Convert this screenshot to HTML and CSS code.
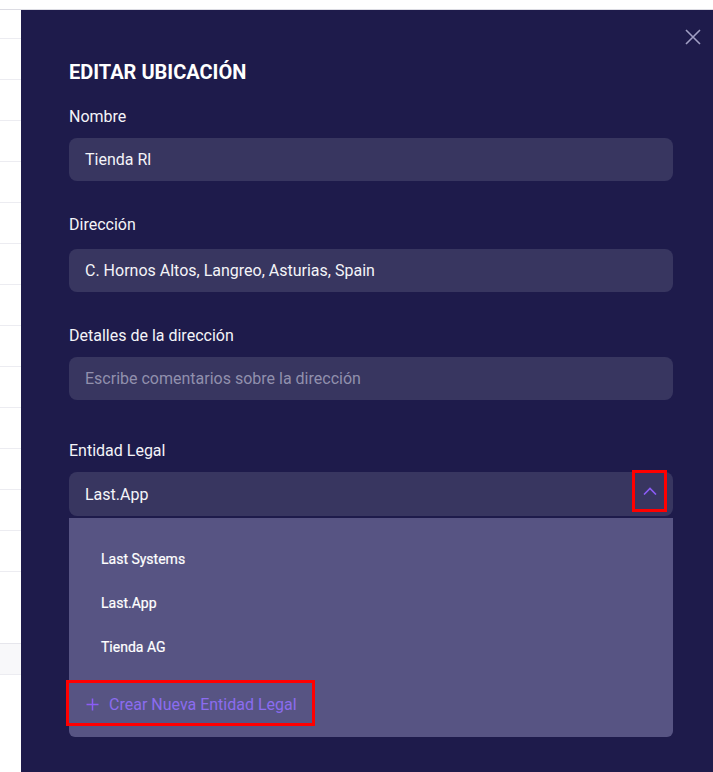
FILE: index.html
```html
<!DOCTYPE html>
<html lang="es">
<head>
    <meta charset="UTF-8">
    <meta name="viewport" content="width=device-width, initial-scale=1.0">
    <title>Editar ubicación</title>
    <link rel="stylesheet" href="styles.css">
</head>
<body>
    <!-- tabla de fondo -->
    <div class="page">
        <div class="topbar"></div>
        <div class="row row-first"></div>
        <div class="row"></div>
        <div class="row"></div>
        <div class="row"></div>
        <div class="row"></div>
        <div class="row"></div>
        <div class="row"></div>
        <div class="row"></div>
        <div class="row"></div>
        <div class="row"></div>
        <div class="row"></div>
        <div class="row"></div>
        <div class="row"></div>
        <div class="row"></div>
        <div class="spacer"></div>
        <div class="band"></div>
    </div>

    <!-- panel lateral -->
    <aside class="drawer">
        <button class="close" aria-label="Cerrar">
            <svg width="16" height="16" viewBox="0 0 16 16"><path d="M1 1L15 15M15 1L1 15" stroke="#a19fc4" stroke-width="1.6" fill="none"/></svg>
        </button>

        <h2 class="title">EDITAR UBICACIÓN</h2>

        <div class="field">
            <label class="label">Nombre</label>
            <div class="input">Tienda Rl</div>
        </div>

        <div class="field field-wide">
            <label class="label">Dirección</label>
            <div class="input">C. Hornos Altos, Langreo, Asturias, Spain</div>
        </div>

        <div class="field field-last">
            <label class="label">Detalles de la dirección</label>
            <div class="input placeholder">Escribe comentarios sobre la dirección</div>
        </div>

        <div class="field">
            <label class="label">Entidad Legal</label>
            <div class="input select">
                <span>Last.App</span>
                <span class="chevron">
                    <svg width="14" height="8" viewBox="0 0 14 8"><path d="M1 7.5L7 1.5L13 7.5" stroke="#8b5cf6" stroke-width="1.6" fill="none"/></svg>
                </span>
            </div>
            <div class="menu">
                <div class="option">Last Systems</div>
                <div class="option">Last.App</div>
                <div class="option">Tienda AG</div>
                <button class="create">
                    <svg width="13" height="13" viewBox="0 0 13 13"><path d="M6.5 0.5V12.5M0.5 6.5H12.5" stroke="#8b5cf6" stroke-width="1.5" fill="none"/></svg>
                    <span>Crear Nueva Entidad Legal</span>
                </button>
            </div>
        </div>
    </aside>
</body>
</html>
```

FILE: styles.css
```css
body {
    margin: 0;
    font-family: Roboto, "Liberation Sans", sans-serif;
    background: #fff;
}

/* fondo */
.page {
    display: flex;
    flex-direction: column;
}
.topbar {
    height: 9px;
    border-bottom: 1px solid #dcdce3;
}
.row {
    height: 40px;
    border-bottom: 1px solid #ececf1;
}
.row-first {
    height: 28px;
}
.spacer {
    height: 71px;
}
.band {
    height: 30px;
    background: #f8f8fa;
    border-top: 1px solid #e6e6ec;
    border-bottom: 1px solid #ececf1;
}

/* panel */
.drawer {
    position: fixed;
    top: 10px;
    left: 21px;
    right: 0;
    bottom: 0;
    background: #1e1b4b;
    padding: 50px 40px 0 48px;
    color: #f4f4f8;
}
.close {
    position: absolute;
    top: 19px;
    right: 12px;
    background: none;
    border: 0;
    padding: 0;
    width: 16px;
    height: 16px;
}
.close svg {
    display: block;
}

.title {
    margin: 0 0 21px;
    font-size: 20px;
    line-height: 24px;
    font-weight: 700;
    color: #fff;
}

.field {
    display: flex;
    flex-direction: column;
    margin-bottom: 32px;
}
.field-wide .label {
    margin-bottom: 12px;
}
.field-last {
    margin-bottom: 39px;
}

.label {
    font-size: 16px;
    line-height: 24px;
    margin-bottom: 9px;
}

.input {
    height: 43px;
    box-sizing: border-box;
    background: #383660;
    border-radius: 8px;
    padding: 0 16px;
    display: flex;
    align-items: center;
    font-size: 16px;
    color: #f4f4f8;
}
.placeholder {
    color: #9190ad;
}

.select {
    position: relative;
    justify-content: space-between;
    height: 44px;
    padding-right: 17px;
}
/* marca roja sobre el icono */
.chevron {
    position: absolute;
    right: 6px;
    top: -2px;
    width: 35px;
    height: 42px;
    box-sizing: border-box;
    border: 3px solid #ff0000;
    display: flex;
    align-items: center;
    justify-content: center;
}
.chevron svg {
    display: block;
}

.menu {
    margin-top: 2px;
    background: #575483;
    border-radius: 0 0 6px 6px;
    padding: 19px 0 11px;
}
.option {
    padding-left: 32px;
    font-size: 14px;
    line-height: 44px;
    color: #fff;
    -webkit-text-stroke: 0.2px #fff;
}
.create {
    margin: 11px 0 0 -3px;
    height: 46px;
    box-sizing: border-box;
    border: 3px solid #ff0000;
    background: none;
    display: flex;
    align-items: center;
    gap: 10px;
    padding: 3px 15px 0 17px;
    font-family: inherit;
    font-size: 16px;
    color: #8b6cf0;
}
.create svg {
    display: block;
}
```
